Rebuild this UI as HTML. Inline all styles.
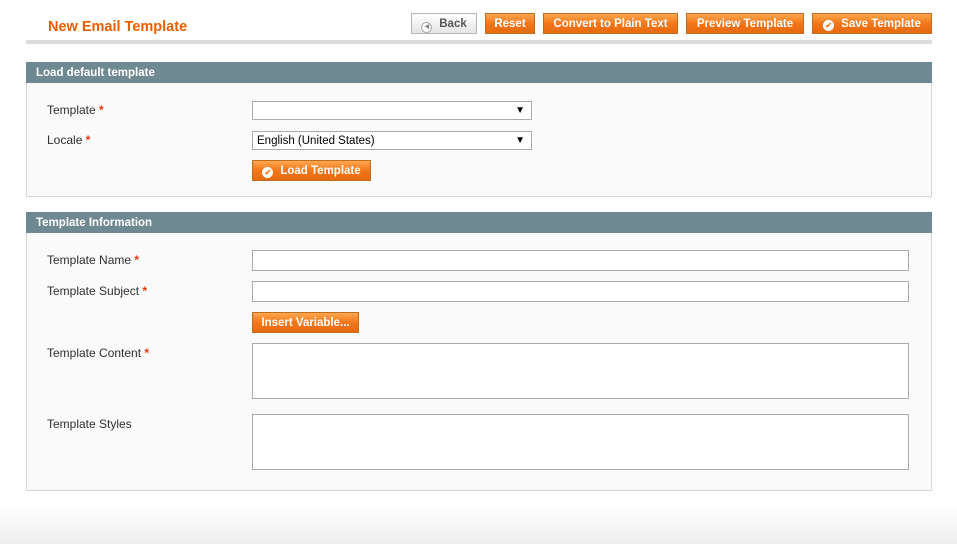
<!DOCTYPE html><html><head><style>
body{margin:0;width:957px;height:544px;background:linear-gradient(#fff 0,#fff 505px,#efefef 544px);font-family:"Liberation Sans",sans-serif;font-size:12px;color:#2f2f2f;position:relative;overflow:hidden}
.a{position:absolute}
.btn{position:absolute;height:19px;border:1px solid #bf6c1e;background:linear-gradient(#fda84f,#f3761a 50%,#e86a0f);color:#fff;font-weight:bold;font-size:11.5px;line-height:21px;text-align:center;box-sizing:content-box}
.ic{display:inline-block;width:11px;height:11px;border-radius:50%;background:#fff;color:#f27717;font-size:8px;line-height:11px;vertical-align:-1px;margin-right:7px}
.hd{position:absolute;left:26px;width:906px;height:21px;background:#6f8992;color:#fff;font-weight:bold;font-size:11.5px;line-height:23px;text-indent:10px}
.bd{position:absolute;left:26px;width:904px;border:1px solid #d6d6d6;border-top:0;background:#fafafa}
.in{position:absolute;border:1px solid #aaa;background:#fff;box-sizing:border-box}
.lb{position:absolute;left:47px;font-size:12px}
.lb b{color:#eb340a}
.arr{position:absolute;right:6px;top:3px;font-size:10px;color:#000}
</style></head><body>
<div class="a" style="left:48px;top:19px;color:#eb5e00;font-weight:bold;font-size:14.5px">New Email Template</div>
<div class="a" style="left:26px;top:40px;width:906px;height:4px;background:#dcdcdc"></div>
<div class="btn" style="left:411px;top:13px;width:64px;background:linear-gradient(#fff,#e4e4e4);border-color:#b6b6b6;color:#555"><span class="ic" style="border:1px solid #aaa;width:9px;height:9px;line-height:9px;color:#888;font-size:6px">◀</span>Back</div>
<div class="btn" style="left:485px;top:13px;width:48px">Reset</div>
<div class="btn" style="left:543px;top:13px;width:133px">Convert to Plain Text</div>
<div class="btn" style="left:686px;top:13px;width:116px">Preview Template</div>
<div class="btn" style="left:812px;top:13px;width:118px"><span class="ic">✔</span>Save Template</div>

<div class="hd" style="top:62px">Load default template</div>
<div class="bd" style="top:83px;height:113px"></div>
<div class="lb" style="top:103px">Template <b>*</b></div>
<div class="in" style="left:252px;top:101px;width:280px;height:19px"><span class="arr">▼</span></div>
<div class="lb" style="top:133px">Locale <b>*</b></div>
<div class="in" style="left:252px;top:131px;width:280px;height:19px;padding:3px 4px;font-size:11.5px;color:#000">English (United States)<span class="arr">▼</span></div>
<div class="btn" style="left:252px;top:160px;width:117px"><span class="ic">✔</span>Load Template</div>

<div class="hd" style="top:212px">Template Information</div>
<div class="bd" style="top:233px;height:257px"></div>
<div class="lb" style="top:253px">Template Name <b>*</b></div>
<div class="in" style="left:252px;top:250px;width:657px;height:21px"></div>
<div class="lb" style="top:284px">Template Subject <b>*</b></div>
<div class="in" style="left:252px;top:281px;width:657px;height:21px"></div>
<div class="btn" style="left:252px;top:312px;width:105px">Insert Variable...</div>
<div class="lb" style="top:346px">Template Content <b>*</b></div>
<div class="in" style="left:252px;top:343px;width:657px;height:56px"></div>
<div class="lb" style="top:417px">Template Styles</div>
<div class="in" style="left:252px;top:414px;width:657px;height:56px"></div>
</body></html>
